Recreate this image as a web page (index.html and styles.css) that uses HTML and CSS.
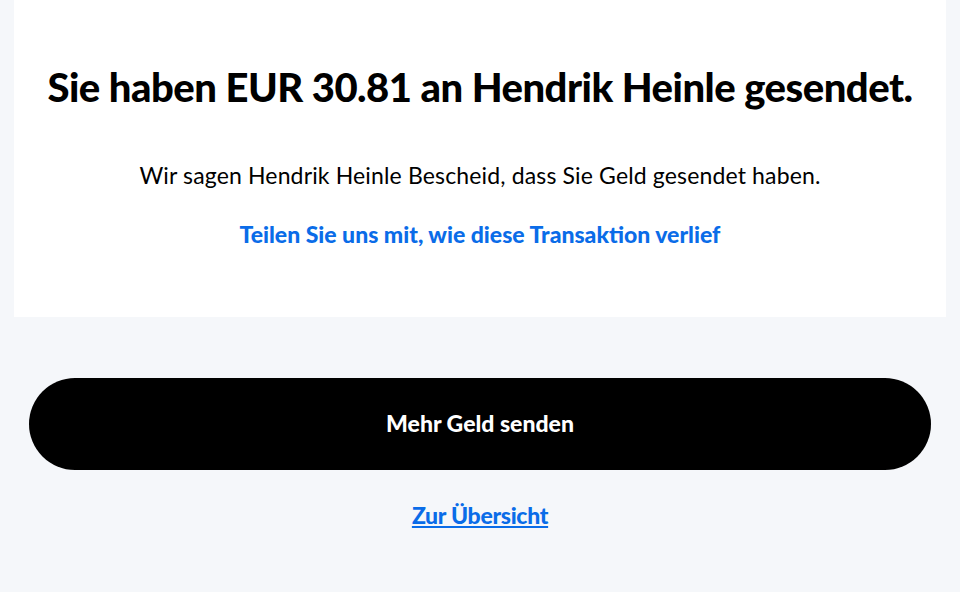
FILE: index.html
```html
<!DOCTYPE html>
<html lang="de">
<head>
    <meta charset="UTF-8">
    <meta name="viewport" content="width=device-width, initial-scale=1.0">
    <title>Geld gesendet</title>
    <link rel="stylesheet" href="styles.css">
</head>
<body>
    <div class="card">
        <h1>Sie haben EUR 30.81 an Hendrik Heinle gesendet.</h1>
        <p class="note">Wir sagen Hendrik Heinle Bescheid, dass Sie Geld gesendet haben.</p>
        <a class="feedback" href="#">Teilen Sie uns mit, wie diese Transaktion verlief</a>
    </div>
    <div class="actions">
        <button class="send-more" type="button">Mehr Geld senden</button>
        <a class="overview" href="#">Zur Übersicht</a>
    </div>
</body>
</html>
```

FILE: styles.css
```css
body {
    font-family: Lato, "Liberation Sans", sans-serif;
    margin: 0;
    padding: 0 14px;
    background-color: #f5f7fa;
    color: #000;
}
.card {
    background-color: #fff;
    height: 317px;
    box-sizing: border-box;
    padding-top: 61px;
    text-align: center;
}
h1 {
    margin: 0;
    font-size: 40px;
    font-weight: 900;
    letter-spacing: -0.5px;
    line-height: 52px;
}
.note {
    margin: 48px 0 0;
    font-size: 23px;
    letter-spacing: 0.15px;
    line-height: 28px;
}
.feedback {
    display: inline-block;
    margin-top: 31px;
    font-size: 23px;
    font-weight: 900;
    color: #0a6ce8;
    text-decoration: none;
}
.actions {
    display: flex;
    flex-direction: column;
    align-items: center;
    padding: 61px 15px 0;
}
.send-more {
    width: 100%;
    height: 92px;
    padding: 0 0 3px;
    border: none;
    border-radius: 46px;
    background-color: #000;
    color: #fff;
    font-family: inherit;
    font-size: 23px;
    font-weight: 900;
    cursor: pointer;
}
.overview {
    margin-top: 31px;
    font-size: 23px;
    font-weight: 900;
    letter-spacing: -0.3px;
    color: #0a6ce8;
    text-decoration: underline;
}
```
